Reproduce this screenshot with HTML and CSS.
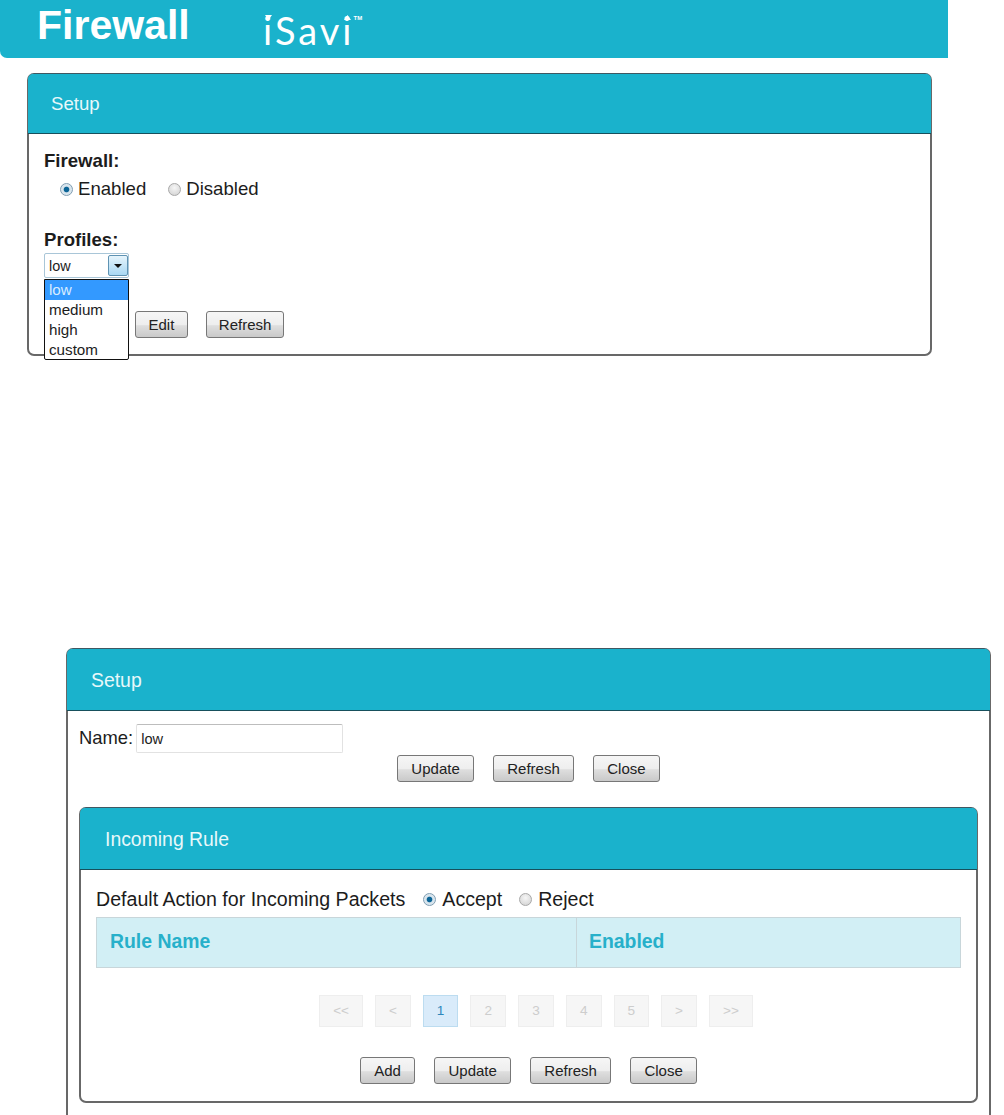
FILE: index.html
```html
<!DOCTYPE html>
<html lang="en">
<head>
<meta charset="utf-8">
<title>Firewall</title>
<link rel="stylesheet" href="styles.css">
</head>
<body>
<header class="topbar">
  <h1 class="title">Firewall</h1>
  <div class="logo">iSavi<span class="tm">TM</span></div>
</header>

<section class="panel panel-one">
  <h2 class="panel-head panel-head-one">Setup</h2>
  <div class="panel-one-body">
    <div class="field-label">Firewall:</div>
    <div class="radio-row radio-row-indent">
      <label class="radio-item"><input type="radio" name="fw" checked><span>Enabled</span></label>
      <label class="radio-item"><input type="radio" name="fw"><span>Disabled</span></label>
    </div>
    <div class="field-label field-label-profiles">Profiles:</div>
    <div class="select-wrap">
      <div class="select-box">
        <span class="select-value">low</span>
        <span class="select-arrow"></span>
      </div>
      <ul class="select-list">
        <li class="select-option is-selected">low</li>
        <li class="select-option">medium</li>
        <li class="select-option">high</li>
        <li class="select-option">custom</li>
      </ul>
    </div>
    <div class="button-row button-row-one">
      <button class="btn btn-tight" type="button">Edit</button>
      <button class="btn btn-tight" type="button">Refresh</button>
    </div>
  </div>
</section>

<section class="panel panel-two">
  <h2 class="panel-head panel-head-two">Setup</h2>
  <div class="panel-two-body">
    <div class="name-row">
      <label class="name-label" for="profile-name">Name:</label>
      <input class="name-input" id="profile-name" type="text" value="low">
    </div>
    <div class="button-row button-row-center button-row-top">
      <button class="btn" type="button">Update</button>
      <button class="btn" type="button">Refresh</button>
      <button class="btn" type="button">Close</button>
    </div>

    <section class="panel panel-inner">
      <h3 class="panel-head panel-head-two panel-head-inner">Incoming Rule</h3>
      <div class="inner-body">
        <div class="radio-row default-row">
          <span class="default-text">Default Action for Incoming Packets</span>
          <label class="radio-item"><input type="radio" name="act" checked><span>Accept</span></label>
          <label class="radio-item"><input type="radio" name="act"><span>Reject</span></label>
        </div>
        <table class="rules">
          <thead>
            <tr><th class="col-name">Rule Name</th><th>Enabled</th></tr>
          </thead>
        </table>
        <nav class="pager">
          <span class="page page-wide">&lt;&lt;</span>
          <span class="page">&lt;</span>
          <span class="page page-active">1</span>
          <span class="page">2</span>
          <span class="page">3</span>
          <span class="page">4</span>
          <span class="page">5</span>
          <span class="page">&gt;</span>
          <span class="page page-wide">&gt;&gt;</span>
        </nav>
        <div class="button-row button-row-center button-row-bottom">
          <button class="btn" type="button">Add</button>
          <button class="btn" type="button">Update</button>
          <button class="btn" type="button">Refresh</button>
          <button class="btn" type="button">Close</button>
        </div>
      </div>
    </section>
  </div>
</section>
</body>
</html>
```
FILE: styles.css
```css
* { box-sizing: border-box; }
html, body { margin: 0; padding: 0; height: 1115px; overflow: hidden; background: #fff; }
body { font-family: "Liberation Sans", Arial, sans-serif; color: #1c1c1c; font-size: 18.6px; }

.topbar {
  width: 948px; height: 58px;
  background: #1ab2cc;
  border-bottom-left-radius: 7px;
  display: flex; align-items: flex-start;
  padding-left: 37px;
  color: #fff;
}
.title { margin: 2px 0 0; font-size: 41px; line-height: 46px; font-weight: 700; width: 226px; }
.logo { position: relative; font-family: Lato, sans-serif; font-weight: 400; font-size: 38px; line-height: 46px; letter-spacing: 3px; margin-top: 7px; display: flex; }
.logo::before, .logo::after {
  content: ""; position: absolute; top: 8px; width: 7px; height: 5px; background: #fff;
}
.logo::before { left: 2px; clip-path: polygon(0 0, 100% 0, 50% 100%); }
.logo::after { left: 81px; clip-path: polygon(50% 0, 100% 100%, 0 100%); }
.tm { font-size: 6px; line-height: 8px; font-family: "Liberation Sans", sans-serif; font-weight: 700; letter-spacing: 0; margin: 7px 0 0 -1px; }

.panel { border: 2px solid #686868; border-top: 1px solid #3f5862; border-radius: 7px; background: #fff; }
.panel-head {
  margin: 0 -1px; height: 60px; padding-left: 24px;
  background: #1ab2cc; color: #e8f8fa;
  border-bottom: 1px solid #17505c;
  border-radius: 5px 5px 0 0;
  font-size: 18.6px; font-weight: 400; line-height: 59px;
}
.panel-head-one { padding-left: 23px; }
.panel-one { width: 905px; height: 283px; margin: 15px 0 0 27px; }
.panel-two { width: 925px; margin: 292px 0 0 66px; height: 600px; }
.panel-head-two { height: 62px; line-height: 62px; font-size: 19.4px; }
.panel-head-inner { padding-left: 25px; }

.panel-one-body { padding: 16px 15px 0; }
.field-label { font-weight: 700; line-height: 22px; }
.field-label-profiles { margin-top: 29px; }
.radio-row { display: flex; align-items: center; }
.radio-row-indent { padding-left: 16px; gap: 22px; margin-top: 6px; height: 22px; }
.radio-item { display: inline-flex; align-items: center; gap: 5px; line-height: 22px; }
.radio-item input {
  appearance: none; -webkit-appearance: none; margin: 0;
  width: 13px; height: 13px; border-radius: 50%;
  border: 1px solid #a8a8a8;
  background: radial-gradient(circle at 50% 35%, #f6f6f6 0, #cfcfcf 100%);
}
.radio-item input:checked {
  border-color: #7f9db2;
  background: radial-gradient(circle, #0b6496 0, #0b6496 30%, #d5e3ec 42%, #e3ebf1 100%);
}

.select-wrap { position: relative; width: 85px; height: 25px; margin-top: 2px; }
.select-box {
  width: 85px; height: 25px; display: flex; align-items: center; justify-content: space-between;
  border: 1px solid #a9c6d8; border-radius: 2px; background: #fff; padding: 1px 0 1px 1px;
}
.select-value { font-size: 14.4px; padding-left: 3px; }
.select-arrow {
  width: 20px; height: 100%; position: relative;
  border: 1px solid #5f93b3; border-radius: 2px;
  background: linear-gradient(#e6f4fc, #a9d8f3);
}
.select-arrow::after {
  content: ""; position: absolute; left: 5px; top: 8px;
  border: 4px solid transparent; border-top: 4px solid #111; border-bottom: 0;
}
.select-list {
  position: absolute; left: 0; top: 26px; z-index: 2;
  width: 85px; height: 81px; margin: 0; padding: 0; list-style: none;
  background: #fff; border: 1px solid #111; border-radius: 0 0 2px 2px;
}
.select-option { height: 20px; line-height: 20px; padding-left: 4px; font-size: 15.2px; }
.is-selected { background: #3399ff; color: #d8ecff; }

.button-row { display: flex; }
.button-row-one { gap: 18px; padding-left: 91px; margin-top: 33px; }
.button-row-center { justify-content: center; }
.button-row-top { gap: 18.5px; margin-top: 2px; }
.button-row-bottom { gap: 18.5px; margin-top: 30px; }
.btn {
  height: 27px; padding: 0 13.5px; font: 400 15px/25px "Liberation Sans", Arial, sans-serif;
  color: #222; border: 1px solid #777; border-radius: 3px;
  background: linear-gradient(#f6f6f6 0, #eeeeee 50%, #dedede 55%, #c9c9c9 100%);
}
.btn-tight { padding: 0 12px; }
.btn-tight:first-child { padding: 0 12.5px; }

.panel-two-body { padding: 12px 11px 0; }
.name-row { display: flex; align-items: center; gap: 3px; height: 30px; }
.name-label { font-size: 18.4px; }
.name-input {
  width: 207px; height: 29px; padding: 2px 4px 0; font: 400 14.6px "Liberation Sans", Arial, sans-serif; color: #222;
  border: 1px solid #e2e2e2; border-top-color: #bdbdbd; border-radius: 2px; background: #fff;
}
.panel-inner { margin-top: 25px; height: 296px; }
.inner-body { padding: 16px 15px 0; }
.default-row { height: 26px; font-size: 19.6px; }
.default-row .radio-item { gap: 6px; }
.default-text { margin-right: 18px; }
.default-row .radio-item + .radio-item { margin-left: 17px; }
.rules { width: 100%; height: 51px; margin-top: 5px; border-collapse: collapse; table-layout: fixed; background: #d2eff5; }
.rules th {
  border: 1px solid #c8d6da; text-align: left; padding: 0 0 3px 12px;
  color: #27b0ca; font-size: 19.4px; font-weight: 700;
}
.rules .col-name { width: 480px; padding-left: 13px; }
.pager { display: flex; gap: 12px; justify-content: center; margin-top: 27px; padding-left: 15px; }
.page {
  width: 35.7px; height: 32px; line-height: 30px; text-align: center; font-size: 13.6px;
  color: #cdcdcd; background: #f6f6f6; border: 1px solid #eee;
}
.page-wide { width: 44px; }
.page-active { background: #d9ebfa; border-color: #bcdcf0; color: #2d86bb; }
```
